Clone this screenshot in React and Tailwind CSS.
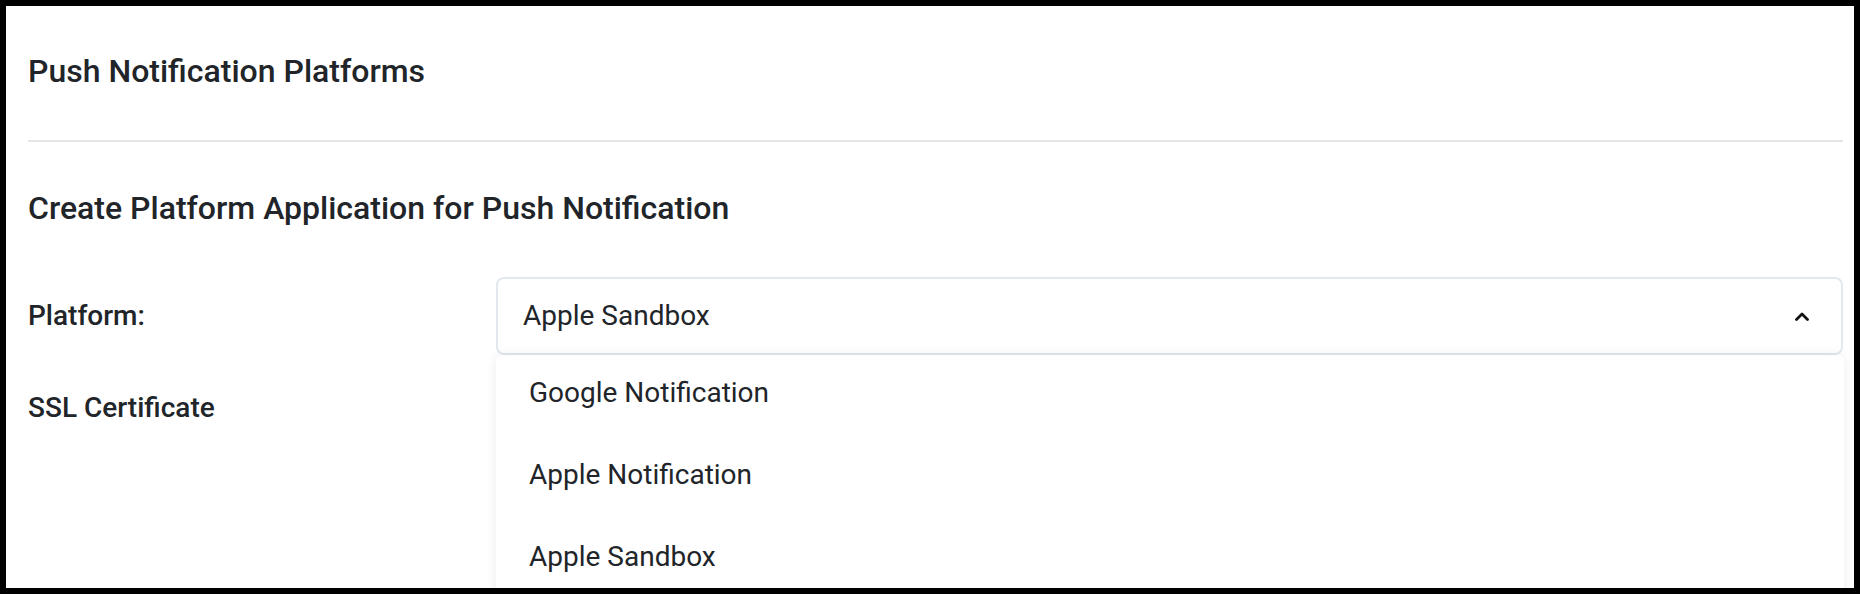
import React, { useState } from "react";

const OPTIONS = ["Google Notification", "Apple Notification", "Apple Sandbox"];

const ChevronUp = () => (
  <svg width="14" height="9" viewBox="0 0 14 9" fill="none">
    <polyline
      points="1.5,7.5 7,2 12.5,7.5"
      stroke="#111"
      strokeWidth="2.8"
      strokeLinecap="round"
      strokeLinejoin="round"
    />
  </svg>
);

const App = () => {
  const [platform, setPlatform] = useState("Apple Sandbox");

  return (
    <div
      className="relative w-[1860px] h-[594px] overflow-hidden border-[6px] border-black bg-white pl-[22px] pr-[11px] text-[#212529]"
      style={{ fontFamily: "Roboto, 'Noto Sans', sans-serif" }}
    >
      {/* header */}
      <div className="flex h-[136px] items-center border-b-2 border-[#e5e5e5] pb-[4px]">
        <h1 className="text-[32px] font-medium">Push Notification Platforms</h1>
      </div>

      <div className="flex h-[135px] items-center pb-[4px]">
        <h2 className="text-[32px] font-medium">
          Create Platform Application for Push Notification
        </h2>
      </div>

      {/* form */}
      <div className="flex h-[78px] items-center">
        <label className="w-[468px] shrink-0 text-[28px] font-medium">Platform:</label>
        <div className="flex h-[78px] flex-1 items-center justify-between rounded-[8px] border-2 border-[#e3e8f0] pl-[25px] pr-[32px]">
          <span className="text-[28px]">{platform}</span>
          <ChevronUp />
        </div>
      </div>

      <div className="flex h-[106px] items-center">
        <label className="w-[468px] shrink-0 text-[28px] font-medium">SSL Certificate</label>
      </div>

      {/* open dropdown */}
      <ul className="absolute left-[490px] top-[349px] w-[1348px] rounded-[6px] bg-white shadow-[0_0_12px_rgba(0,0,0,0.08)]">
        {OPTIONS.map((opt) => (
          <li
            key={opt}
            onClick={() => setPlatform(opt)}
            className="flex h-[82px] cursor-pointer items-center pb-[6px] pl-[33px] text-[28px]"
          >
            {opt}
          </li>
        ))}
      </ul>
    </div>
  );
};

export default App;
